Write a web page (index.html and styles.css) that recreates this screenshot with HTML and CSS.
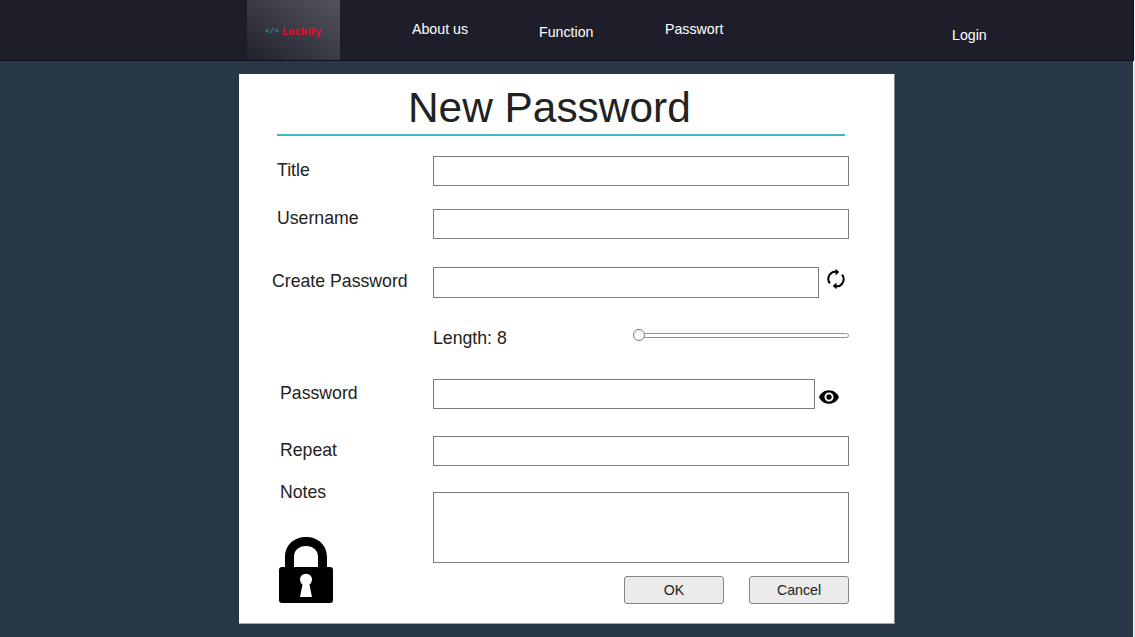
FILE: index.html
```html
<!DOCTYPE html>
<html lang="en">
<head>
<meta charset="utf-8">
<title>Lockify</title>
<link rel="stylesheet" href="styles.css">
</head>
<body>
<header class="navbar">
  <a class="logo"><span class="logo-code">&lt;/&gt;</span><span class="logo-name">Lockify</span></a>
  <nav class="links">
    <a class="link about">About us</a>
    <a class="link function">Function</a>
    <a class="link passwort">Passwort</a>
    <a class="link login">Login</a>
  </nav>
</header>
<main class="card">
  <h1 class="heading"><span class="heading-text">New Password</span></h1>
  <form class="form">
    <div class="row title"><label class="label">Title</label><input class="field" type="text"></div>
    <div class="row username"><label class="label">Username</label><input class="field" type="text"></div>
    <div class="row create"><label class="label">Create Password</label><input class="field" type="text">
      <svg class="refresh" viewBox="0 0 18 22"><g fill="none" stroke="#000" stroke-width="2"><path d="M2.9 15.4A6.8 7.2 0 0 1 9.8 3.9"/><path d="M15.1 6.6A6.8 7.2 0 0 1 8.2 18.1"/></g><path d="M8.5 .8 12.3 4.1 8.5 7.4ZM9.5 14.6 5.7 17.9 9.5 21.2Z"/></svg>
    </div>
    <div class="row length"><span class="label"></span><span class="length-text">Length: 8</span><div class="slider"><span class="knob"></span><span class="track"></span></div></div>
    <div class="row password"><label class="label">Password</label><input class="field" type="text">
      <svg class="eye" viewBox="1 4.5 22 15"><path d="M12 4.5C7 4.5 2.73 7.61 1 12c1.73 4.39 6 7.5 11 7.5s9.27-3.11 11-7.5c-1.73-4.39-6-7.5-11-7.5zM12 17c-2.76 0-5-2.24-5-5s2.24-5 5-5 5 2.24 5 5-2.24 5-5 5zm0-8c-1.66 0-3 1.34-3 3s1.34 3 3 3 3-1.34 3-3-1.34-3-3-3z"/></svg>
    </div>
    <div class="row repeat"><label class="label">Repeat</label><input class="field" type="text"></div>
    <div class="row notes"><label class="label">Notes</label><textarea class="field area"></textarea></div>
    <div class="footer">
      <svg class="lock" viewBox="0 0 54 66"><path fill-rule="evenodd" d="M6 30V20C6 8 15 0 27 0S48 8 48 20V30H51Q54 30 54 33V63Q54 66 51 66H3Q0 66 0 63V33Q0 30 3 30ZM15 30H39V20C39 13 34 9 27 9S15 13 15 20ZM23.5 47.5 21 60H33L30.5 47.5A6 6 0 1 0 23.5 47.5Z"/></svg>
      <div class="buttons"><button class="button" type="button">OK</button><button class="button" type="button">Cancel</button></div>
    </div>
  </form>
</main>
</body>
</html>
```
FILE: styles.css
```css
* { box-sizing: border-box; }
body {
  margin: 0;
  height: 637px;
  overflow: hidden;
  background: linear-gradient(#283747, #283747) 0 0 / 1133px 100% no-repeat #e9e9e9;
  font-family: "Liberation Sans", Arial, sans-serif;
  color: #222;
}
.navbar {
  display: flex;
  width: 1134px;
  height: 61px;
  padding-left: 247px;
  background: #1e1e2b;
  border-bottom: 1px solid #10131c;
  border-right: 1px solid #10131c;
}
.logo {
  display: flex;
  align-items: center;
  width: 93px;
  height: 60px;
  padding: 2px 0 0 18px;
  background: linear-gradient(to top right, #21212d, #383843 45%, #54545e);
  white-space: nowrap;
}
.logo-code { width: 17px; font: 8px/12px "Liberation Mono", monospace; color: #2fb5ba; letter-spacing: -.2px; }
.logo-name { font: 700 11px/12px "Open Sans", sans-serif; color: #e8082c; }
.links { display: flex; flex: 1; padding-left: 72px; }
.link { font-size: 14.2px; line-height: 18px; color: #fff; }
.about { width: 127px; padding-top: 20px; }
.function { width: 126px; padding-top: 23px; }
.passwort { width: 287px; padding-top: 20px; }
.login { padding-top: 26px; }
.card {
  width: 656px;
  height: 550px;
  margin: 13px 0 0 239px;
  padding: 13px 0 0 38px;
  background: #fff;
  border-right: 1px solid #7d858e;
  border-bottom: 1px solid #a5aaaf;
}
.heading {
  width: 568px;
  height: 49px;
  margin: 0;
  padding-left: 131px;
  border-bottom: 2px solid #3cbac4;
  font-size: 42.4px;
  font-weight: 400;
  line-height: 42px;
  white-space: nowrap;
}
.heading-text { display: block; height: 35px; overflow: hidden; }
.row { display: flex; align-items: flex-start; }
.label { flex: none; width: 156px; padding-top: 4px; font-size: 17.7px; line-height: 20px; white-space: nowrap; }
.field {
  flex: none;
  width: 416px;
  height: 30px;
  margin: 0;
  padding: 4px;
  background: #fff;
  border: 1px solid #7b7b7b;
  border-radius: 0;
  resize: none;
}
.title { margin-top: 20px; }
.username { margin-top: 23px; }
.username .label { padding-top: 0; margin-top: -1px; }
.create { margin-top: 28px; }
.create .label { width: 161px; margin-left: -5px; }
.create .field { width: 386px; height: 31px; }
.refresh { width: 18px; height: 22px; margin: 1px 0 0 8px; }
.length { margin-top: 26px; height: 28px; }
.length-text { width: 200px; padding-top: 4px; font-size: 17.7px; line-height: 20px; }
.slider { display: flex; align-items: center; width: 216px; height: 12px; margin-top: 5px; }
.knob { width: 12px; height: 12px; border: 1px solid #777; border-radius: 50%; background: #fff; }
.track { flex: 1; height: 5px; margin-left: -1px; border: 1px solid #929292; border-radius: 0 3px 3px 0; }
.password { margin-top: 27px; }
.password .label, .repeat .label, .notes .label { padding-left: 3px; }
.password .field { width: 382px; }
.eye { width: 20px; height: 14px; margin: 11px 0 0 4px; }
.repeat { margin-top: 27px; }
.notes { margin-top: 16px; }
.notes .label { padding-top: 0; }
.area { height: 71px; margin-top: 10px; }
.footer { display: flex; justify-content: space-between; align-items: flex-start; width: 572px; margin-top: -26px; padding-left: 2px; }
.lock { width: 54px; height: 66px; }
.buttons { display: flex; gap: 25px; padding-top: 39px; }
.button {
  width: 100px;
  height: 28px;
  padding: 0;
  background: #ebebeb;
  border: 1px solid #858585;
  border-radius: 3px;
  font: 14.2px/18px "Liberation Sans", Arial, sans-serif;
  color: #222;
}
```
